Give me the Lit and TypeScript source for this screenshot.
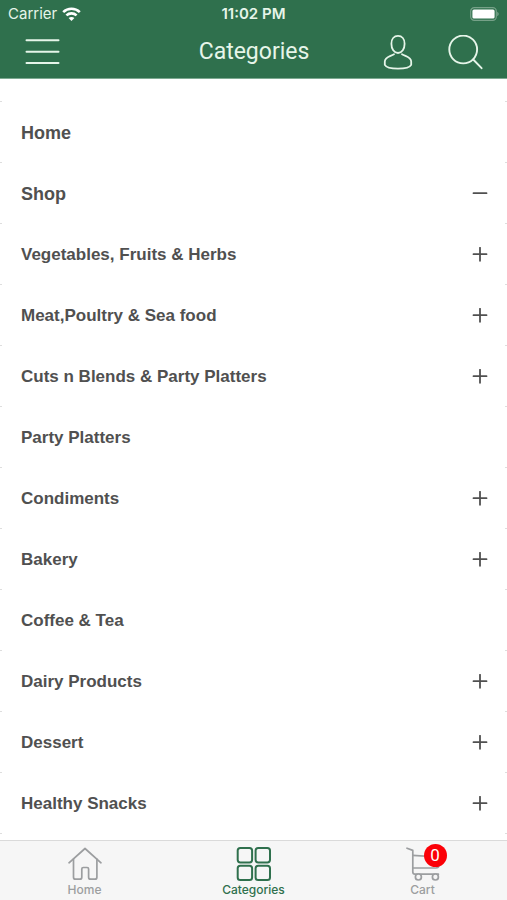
import { LitElement, html, css, svg, nothing } from "lit";
import { customElement, property, state } from "lit/decorators.js";
import { classMap } from "lit/directives/class-map.js";

interface Category {
  name: string;
  top?: boolean;
  expandable?: boolean;
  open?: boolean;
}

const CATEGORIES: Category[] = [
  { name: "Home", top: true },
  { name: "Shop", top: true, expandable: true, open: true },
  { name: "Vegetables, Fruits & Herbs", expandable: true },
  { name: "Meat,Poultry & Sea food", expandable: true },
  { name: "Cuts n Blends & Party Platters", expandable: true },
  { name: "Party Platters" },
  { name: "Condiments", expandable: true },
  { name: "Bakery", expandable: true },
  { name: "Coffee & Tea" },
  { name: "Dairy Products", expandable: true },
  { name: "Dessert", expandable: true },
  { name: "Healthy Snacks", expandable: true },
];

@customElement("status-bar")
class StatusBar extends LitElement {
  static styles = css`
    :host {
      display: grid;
      grid-template-columns: 1fr auto 1fr;
      align-items: center;
      height: 28px;
      padding: 0 8px;
      font: 400 15px/28px Inter, sans-serif;
    }
    .carrier {
      display: flex;
      align-items: center;
      gap: 5px;
      color: #e6f5e9;
    }
    .time {
      font-weight: 600;
      color: #e6f5e9;
    }
    .battery {
      justify-self: end;
    }
    svg {
      display: block;
    }
  `;
  render() {
    return html`
      <span class="carrier">
        Carrier
        <svg width="19" height="14" viewBox="0 0 19 14" fill="none" stroke="#fff" stroke-width="2.6" aria-hidden="true">
          <path d="M1.2 5.1C5.8.6 13.2.6 17.8 5.1" />
          <path d="M4.4 8.4c2.9-2.7 7.3-2.7 10.2 0" />
          <path d="M9.5 14 6.6 11.1c1.7-1.4 4.1-1.4 5.8 0z" fill="#fff" stroke="none" />
        </svg>
      </span>
      <span class="time">11:02 PM</span>
      <svg class="battery" width="29" height="14" viewBox="0 0 29 14" aria-hidden="true">
        <rect x=".7" y=".7" width="25.600" height="12.600" rx="3.600" fill="none" stroke="#76a188" stroke-width="1.200" />
        <rect x="2.400" y="2.400" width="22.200" height="9.200" rx="1.600" fill="#fff" />
        <path d="M27.200 4.800c2 .8 2 3.600 0 4.400z" fill="#76a188" />
      </svg>
    `;
  }
}

@customElement("category-row")
class CategoryRow extends LitElement {
  @property({ attribute: false }) item!: Category;
  @state() private open = false;

  static styles = css`
    :host {
      display: block;
    }
    .row {
      box-sizing: border-box;
      display: flex;
      align-items: center;
      justify-content: space-between;
      width: 100%;
      height: 61px;
      padding: 0 19px 0 21px;
      border: 0;
      color: #505050;
      background:
        linear-gradient(#dedede, #dedede) left bottom / 2px 1px no-repeat,
        linear-gradient(#dedede, #dedede) right bottom / 2px 1px no-repeat,
        #fff;
      font: 700 17px/24px "Liberation Sans", Arial, sans-serif;
      text-align: left;
      text-decoration: none;
      cursor: pointer;
    }
    .top {
      font-size: 18px;
    }
    svg {
      display: block;
    }
  `;

  willUpdate(changed: Map<string, unknown>) {
    if (changed.has("item")) this.open = !!this.item.open;
  }

  render() {
    const cls = classMap({ row: true, top: !!this.item.top });
    if (!this.item.expandable) {
      return html`<a class=${cls} href="#">${this.item.name}</a>`;
    }
    return html`
      <button class=${cls} type="button" aria-expanded=${this.open ? "true" : "false"} @click=${() => (this.open = !this.open)}>
        <span>${this.item.name}</span>
        <svg width="16" height="16" viewBox="0 0 16 16" stroke="#505050" stroke-width="1.8" stroke-linecap="round" aria-hidden="true">
          <path d="M1.500 7.200h13" />
          ${this.open ? nothing : svg`<path d="M8 .8v13" />`}
        </svg>
      </button>
    `;
  }
}

@customElement("tab-bar")
class TabBar extends LitElement {
  static styles = css`
    :host {
      display: block;
      flex: none;
      border-top: 1px solid #dadada;
      background: #f6f6f6;
    }
    nav {
      display: grid;
      grid-template-columns: repeat(3, 1fr);
      height: 59px;
    }
    a {
      display: flex;
      flex-direction: column;
      align-items: center;
      padding-top: 5px;
      color: #9c9ea0;
      font: 500 12px/16px Inter, sans-serif;
      text-decoration: none;
    }
    .active {
      color: #2f704d;
    }
    .icon {
      position: relative;
      width: 36px;
      height: 36px;
    }
    svg {
      display: block;
      fill: none;
      stroke: currentColor;
      stroke-linejoin: round;
      stroke-linecap: round;
    }
    .badge {
      position: absolute;
      top: -2px;
      right: -6px;
      width: 23px;
      height: 23px;
      border-radius: 50%;
      background: #fb0007;
      color: #fff;
      font: 400 17px/23px Roboto, sans-serif;
      text-align: center;
    }
  `;
  render() {
    return html`
      <nav aria-label="Main">
        <a href="#">
          <span class="icon">
            <svg width="36" height="36" viewBox="0 0 36 36" stroke-width="1.7" aria-hidden="true">
              <path d="M2 16.800 18 2.500l16 14.300" />
              <path d="M6.500 13v18.200q0 2 2 2h4.300q2 0 2-2V23q0-1.500 1.500-1.500h3.800q1.500 0 1.500 1.500v8.200q0 2 2 2h4.300q2 0 2-2V13" />
            </svg>
          </span>
          Home
        </a>
        <a class="active" href="#" aria-current="page">
          <span class="icon">
            <svg width="36" height="36" viewBox="0 0 36 36" stroke-width="2" aria-hidden="true">
              <rect x="1.700" y="2" width="14.400" height="14.400" rx="2.600" />
              <rect x="19.600" y="2" width="14.400" height="14.400" rx="2.600" />
              <rect x="1.700" y="19.700" width="14.400" height="14.400" rx="2.600" />
              <rect x="19.600" y="19.700" width="14.400" height="14.400" rx="2.600" />
            </svg>
          </span>
          Categories
        </a>
        <a href="#">
          <span class="icon">
            <svg width="36" height="36" viewBox="0 0 36 36" stroke-width="1.700" aria-hidden="true">
              <path d="M2 2.200 7.800 4.400V26q0 2.200 2.200 2.200h23.400" />
              <path d="M7.800 9.300 33.800 11v8q0 3-3 3H7.800" />
              <circle cx="13.400" cy="31" r="3" fill="#f6f6f6" />
              <circle cx="30.400" cy="31" r="3" fill="#f6f6f6" />
            </svg>
            <span class="badge">0</span>
          </span>
          Cart
        </a>
      </nav>
    `;
  }
}

@customElement("app-root")
class AppRoot extends LitElement {
  static styles = css`
    :host {
      display: flex;
      flex-direction: column;
      height: 100vh;
      background: #fff;
    }
    header {
      flex: none;
      color: #fff;
      background: #2f704d;
      border-bottom: 1px solid #7da991;
    }
    .bar {
      display: grid;
      grid-template-columns: 1fr auto 1fr;
      align-items: center;
      height: 50px;
      padding: 0 23px 0 24px;
    }
    h1 {
      margin: 0;
      padding-bottom: 3px;
      color: #e6f5e9;
      font: 400 23px/28px Roboto, sans-serif;
    }
    button {
      display: block;
      padding: 0;
      border: 0;
      color: inherit;
      background: none;
      cursor: pointer;
    }
    .actions {
      display: flex;
      justify-content: flex-end;
      gap: 32px;
    }
    svg {
      display: block;
      fill: none;
      stroke: #e6f5e9;
      stroke-linecap: round;
      stroke-linejoin: round;
    }
    main {
      flex: 1;
      min-height: 0;
      overflow-y: auto;
      scrollbar-width: none;
    }
    .lead {
      height: 23px;
      background:
        linear-gradient(#dedede, #dedede) left bottom / 2px 1px no-repeat,
        linear-gradient(#dedede, #dedede) right bottom / 2px 1px no-repeat;
    }
    ul {
      margin: 0;
      padding: 0;
      list-style: none;
    }
  `;
  render() {
    return html`
      <header>
        <status-bar></status-bar>
        <div class="bar">
          <button type="button" aria-label="Menu">
            <svg width="36" height="36" viewBox="0 0 36 36" stroke-width="2" aria-hidden="true">
              <path d="M2.500 5.300h32M2.500 16.700h32M2.500 28.100h32" />
            </svg>
          </button>
          <h1>Categories</h1>
          <div class="actions">
            <button type="button" aria-label="Account">
              <svg width="32" height="36" viewBox="0 0 32 36" stroke-width="1.800" aria-hidden="true">
                <path d="M16 .9c4 0 6.600 3 6.600 7.800 0 5.300-2.600 9.300-6.600 9.300s-6.600-4-6.600-9.300C9.400 3.900 12 .9 16 .9z" />
                <path d="M12 19.200C8 21.600 2.800 22 2.800 26.600v3.200C5.400 34.800 26.600 34.800 29.200 29.800v-3.200C29.200 22 24 21.600 20 19.200" />
              </svg>
            </button>
            <button type="button" aria-label="Search">
              <svg width="38" height="36" viewBox="0 0 38 36" stroke-width="1.900" aria-hidden="true">
                <circle cx="17.200" cy="14.500" r="13.900" />
                <path d="m27.200 24.500 8.400 8.700" />
              </svg>
            </button>
          </div>
        </div>
      </header>
      <main>
        <div class="lead"></div>
        <ul>
          ${CATEGORIES.map((item) => html`<li><category-row .item=${item}></category-row></li>`)}
        </ul>
      </main>
      <tab-bar></tab-bar>
    `;
  }
}
